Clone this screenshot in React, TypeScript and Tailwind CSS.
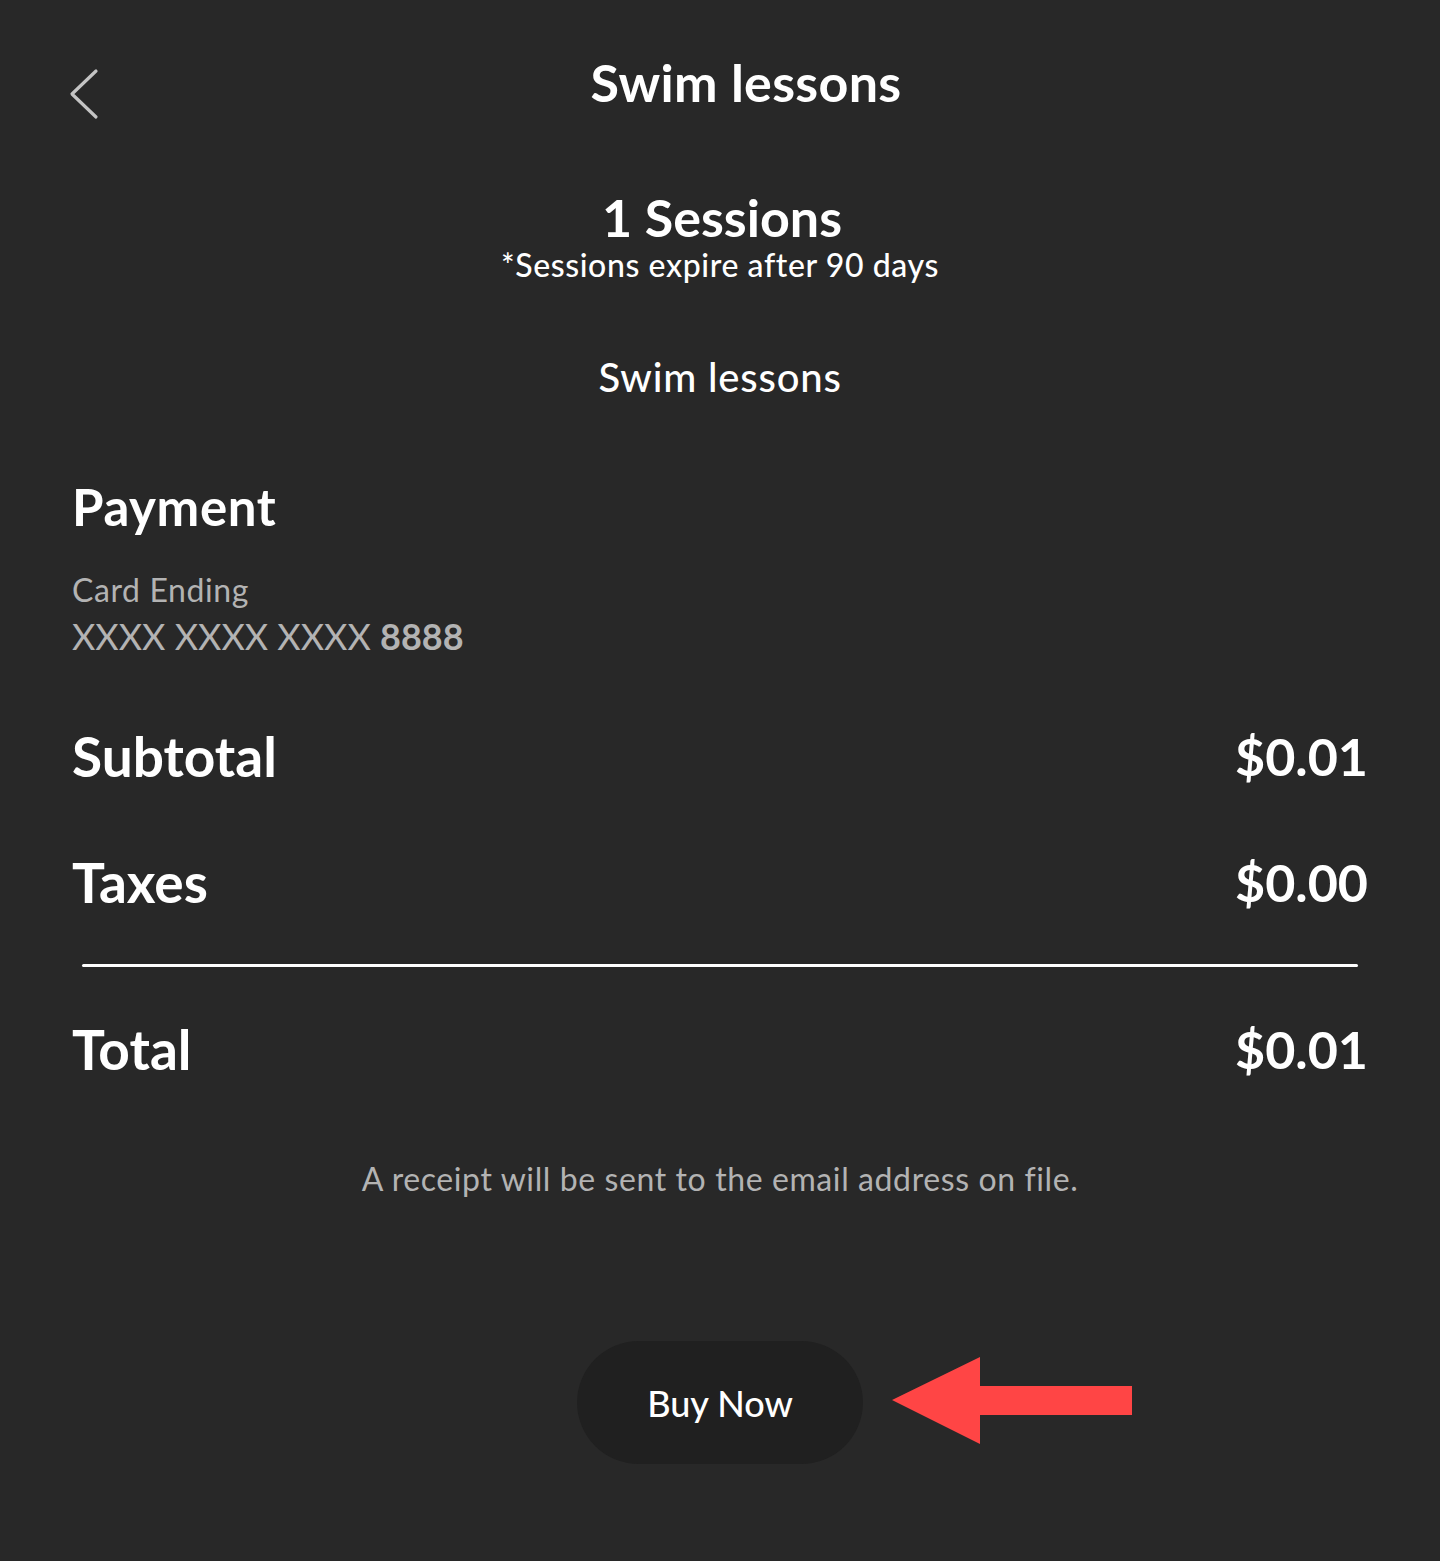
function Row({ label, value }: { label: string; value: string }) {
  return (
    <div className="flex items-center justify-between h-[60px]">
      <span className="text-[55px] font-bold leading-none">{label}</span>
      <span className="text-[52px] font-bold leading-none">{value}</span>
    </div>
  );
}

export default function App() {
  return (
    <div className="min-h-[1561px] w-full bg-[#282828] text-white font-['Lato',sans-serif]">
      {/* header */}
      <div className="flex items-center pl-[68px] pr-[72px] pt-[52px]">
        <button className="w-[40px] h-[60px] flex items-start">
          <svg width="32" height="52" viewBox="0 0 32 52" className="mt-[16px]">
            <polyline points="28,3 4,26 28,49" fill="none" stroke="#c4c4c4" strokeWidth="3.2" strokeLinecap="round" strokeLinejoin="round" />
          </svg>
        </button>
        <h1 className="flex-1 text-center text-[52px] font-bold leading-[60px] pl-[16px] tracking-[0.3px]">Swim lessons</h1>
      </div>

      <div className="flex flex-col items-center mt-[76px]">
        <div className="text-[52px] font-bold leading-[58px] pl-[4px]">1 Sessions</div>
        <div className="text-[32px] font-medium leading-[38px] tracking-[0.6px]">*Sessions expire after 90 days</div>
        <div className="text-[40px] font-medium leading-[46px] mt-[70px] tracking-[0.8px]">Swim lessons</div>
      </div>

      <div className="px-[72px] mt-[78px]">
        <div className="text-[51px] font-bold leading-[58px] tracking-[0.6px]">Payment</div>
        <div className="mt-[34px] text-[32px] leading-[40px] text-[#b3b3b3] tracking-[0.6px]">Card Ending</div>
        <div className="mt-[4px] text-[36px] leading-[44px] text-[#b3b3b3]">
          XXXX XXXX XXXX <span className="font-bold">8888</span>
        </div>

        <div className="mt-[68px] flex flex-col gap-[66px]">
          <Row label="Subtotal" value="$0.01" />
          <Row label="Taxes" value="$0.00" />
        </div>
        <div className="mx-[10px] mt-[52px] h-[3px] rounded-full bg-white" />
        <div className="mt-[52px]">
          <Row label="Total" value="$0.01" />
        </div>

        <p className="mt-[80px] text-center text-[32px] text-[#b3b3b3] leading-[40px] tracking-[0.6px]">
          A receipt will be sent to the email address on file.
        </p>
      </div>

      <div className="mt-[142px] flex items-center justify-center relative">
        <button className="w-[286px] h-[123px] rounded-full bg-[#202020] text-[36px] font-medium">Buy Now</button>
        {/* pointer arrow beside the button */}
        <svg className="absolute left-[892px] top-[16px]" width="242" height="88" viewBox="0 0 242 88">
          <polygon points="0,43 88,0 88,29 240,29 240,58 88,58 88,87" fill="#ff4545" />
        </svg>
      </div>
    </div>
  );
}
